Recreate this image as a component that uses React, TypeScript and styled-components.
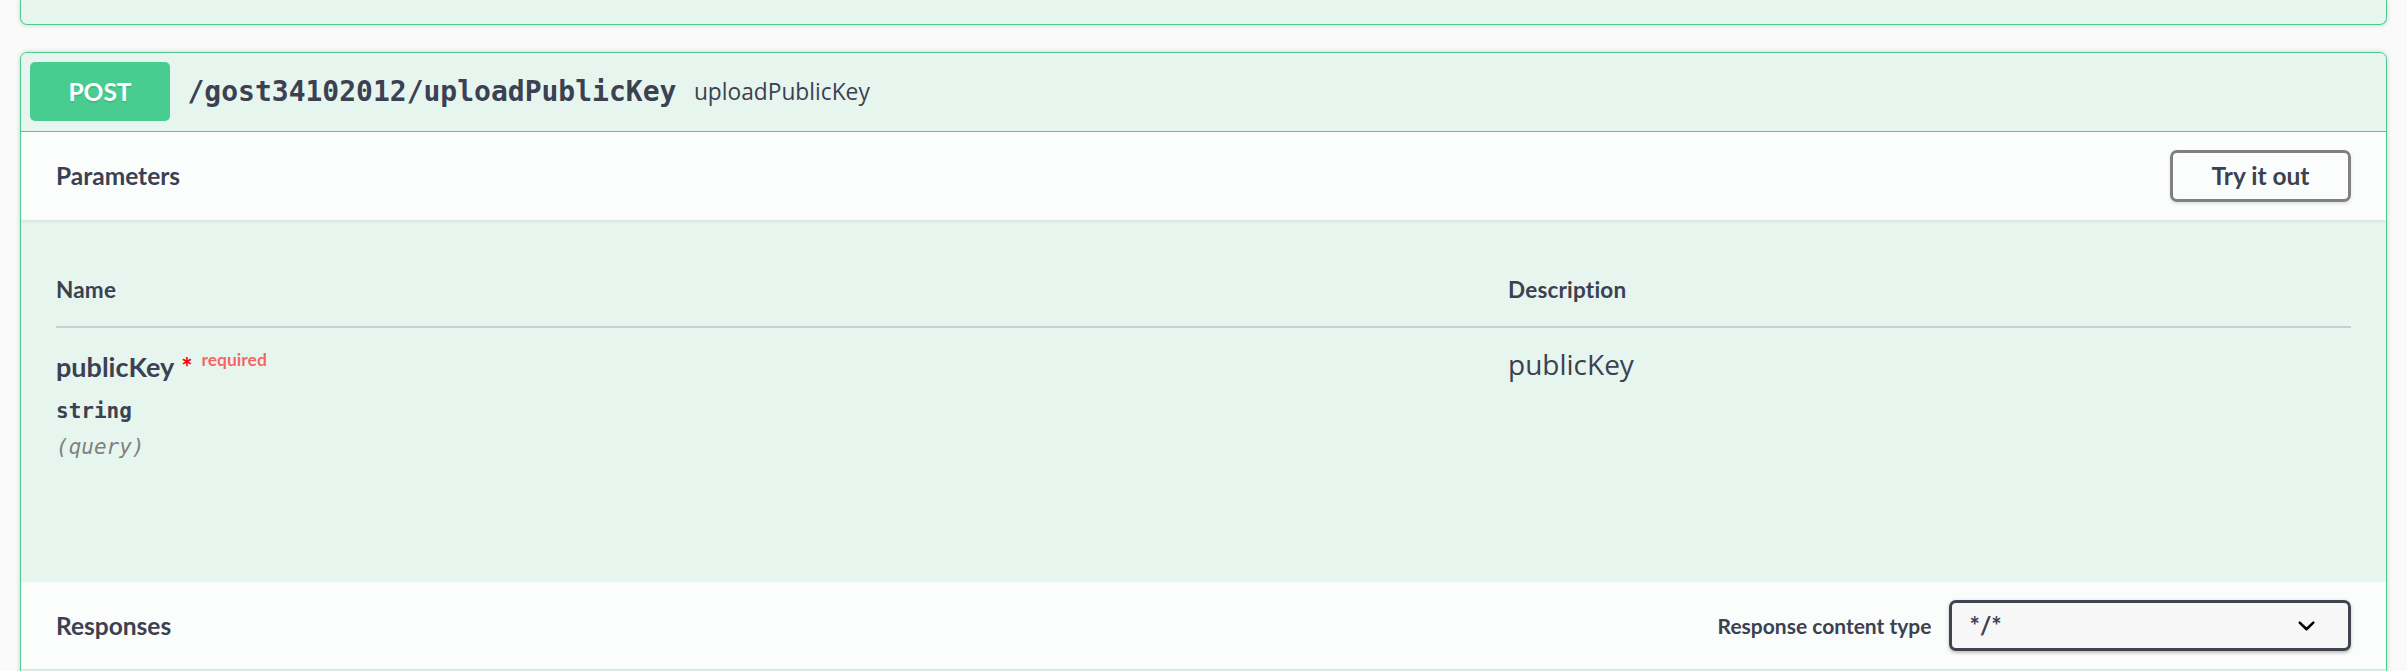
import React from "react";
import styled, { createGlobalStyle } from "styled-components";

const GlobalStyle = createGlobalStyle`
  html, body { margin: 0; padding: 0; background: #fafafa; }
  body { font-family: Lato, "Open Sans", sans-serif; color: #3b4151; }
  * { box-sizing: border-box; }
`;

const Page = styled.div`
  padding: 0 20px;
`;

const PrevBlock = styled.div`
  height: 25px;
  margin-bottom: 27px;
  background: rgba(73, 204, 144, 0.1);
  border: 1px solid #49cc90;
  border-top: none;
  border-radius: 0 0 7px 7px;
  box-shadow: 0 0 5px rgba(0, 0, 0, 0.19);
`;

const OpBlock = styled.div`
  background: rgba(73, 204, 144, 0.1);
  border: 1px solid #49cc90;
  border-radius: 7px;
  box-shadow: 0 0 5px rgba(0, 0, 0, 0.19);
  overflow: hidden;
`;

const Summary = styled.div`
  display: flex;
  align-items: center;
  padding: 9px 9px 10px;
  border-bottom: 1px solid #49cc90;
`;

const Method = styled.span`
  min-width: 140px;
  height: 59px;
  display: flex;
  align-items: center;
  justify-content: center;
  background: #49cc90;
  color: #fff;
  border-radius: 5px;
  font: 700 24.5px Lato, sans-serif;
  text-shadow: 0 1.75px 0 rgba(0, 0, 0, 0.1);
`;

const Path = styled.span`
  padding: 0 17.5px;
  font: 700 28px "DejaVu Sans Mono", monospace;
  color: #3b4151;
`;

const SummaryDesc = styled.span`
  flex: 1;
  font: 400 22.75px "Open Sans", sans-serif;
  color: #3b4151;
`;

const SectionHeader = styled.div`
  display: flex;
  align-items: center;
  min-height: 87.5px;
  padding: 14px 35px;
  background: hsla(0, 0%, 100%, 0.8);
  box-shadow: 0 1.75px 3.5px rgba(0, 0, 0, 0.1);
`;

const SectionTitle = styled.h4`
  flex: 1;
  margin: 0;
  font: 700 24.5px Lato, sans-serif;
  color: #3b4151;
`;

const TryButton = styled.button`
  width: 181px;
  height: 52px;
  border: 3.5px solid #808080;
  border-radius: 7px;
  background: transparent;
  box-shadow: 0 1.75px 3.5px rgba(0, 0, 0, 0.1);
  font: 700 24.5px Lato, sans-serif;
  color: #3b4151;
  cursor: pointer;
`;

const TableContainer = styled.div`
  padding: 34px 35px 35px;
`;

const ParamTable = styled.div`
  display: grid;
  grid-template-columns: 1452px 1fr;
`;

const HeadCell = styled.div`
  padding: 21px 0;
  font: 700 22.5px/30px Lato, sans-serif;
  letter-spacing: 0.2px;
  color: #3b4151;
  border-bottom: 2px solid rgba(59, 65, 81, 0.2);
`;

const BodyCell = styled.div`
  padding-top: 17.5px;
  min-height: 219px;
`;

const ParamName = styled.div`
  font: 700 27px/44px Lato, sans-serif;
  color: #3b4151;
`;

const Star = styled.span`
  color: red;
  margin-left: 7px;
`;

const Required = styled.span`
  font: 700 17.5px Lato, sans-serif;
  color: rgba(255, 0, 0, 0.6);
  padding: 0 8.75px;
  vertical-align: 11px;
`;

const ParamType = styled.div`
  padding: 10px 0;
  font: 600 21px/24px "DejaVu Sans Mono", monospace;
  color: #3b4151;
`;

const ParamIn = styled.div`
  margin-top: 1.5px;
  font: italic 400 21px/24px "DejaVu Sans Mono", monospace;
  color: #808080;
`;

const Markdown = styled.div`
  font: 400 28px "Open Sans", sans-serif;
  color: #3b4151;
`;

const ContentTypeLabel = styled.label`
  display: flex;
  align-items: center;
  font: 700 21px Lato, sans-serif;
  color: #3b4151;
`;

const LabelText = styled.span`
  padding-right: 17.5px;
`;

const SelectBox = styled.div`
  width: 402px;
  height: 51px;
  display: flex;
  align-items: center;
  justify-content: space-between;
  padding: 0 24px 0 17.5px;
  border: 3.5px solid #41444e;
  border-radius: 7px;
  background: #f7f7f7;
  box-shadow: 0 1.75px 3.5px 0 rgba(0, 0, 0, 0.25);
  font: 700 24.5px Lato, sans-serif;
  color: #3b4151;
`;

const ResponsesInner = styled.div`
  padding: 35px;
  min-height: 200px;
`;

const Chevron = () => (
  <svg width="35" height="35" viewBox="0 0 20 20" aria-hidden="true">
    <path
      fill="#000"
      d="M13.418 7.859a.695.695 0 0 1 .978 0 .68.68 0 0 1 0 .969l-3.908 3.83a.697.697 0 0 1-.979 0l-3.908-3.83a.68.68 0 0 1 0-.969.695.695 0 0 1 .978 0L10 11l3.418-3.141z"
    />
  </svg>
);

export default function App() {
  return (
    <>
      <GlobalStyle />
      <Page>
        <PrevBlock />
        <OpBlock>
          <Summary>
            <Method>POST</Method>
            <Path>/gost34102012/uploadPublicKey</Path>
            <SummaryDesc>uploadPublicKey</SummaryDesc>
          </Summary>
          <SectionHeader>
            <SectionTitle>Parameters</SectionTitle>
            <TryButton>Try it out</TryButton>
          </SectionHeader>
          <TableContainer>
            <ParamTable>
              <HeadCell>Name</HeadCell>
              <HeadCell>Description</HeadCell>
              <BodyCell>
                <ParamName>
                  publicKey
                  <Star>*</Star>
                  <Required>required</Required>
                </ParamName>
                <ParamType>string</ParamType>
                <ParamIn>(query)</ParamIn>
              </BodyCell>
              <BodyCell>
                <Markdown>publicKey</Markdown>
              </BodyCell>
            </ParamTable>
          </TableContainer>
          <SectionHeader>
            <SectionTitle>Responses</SectionTitle>
            <ContentTypeLabel>
              <LabelText>Response content type</LabelText>
              <SelectBox>
                <span>*/*</span>
                <Chevron />
              </SelectBox>
            </ContentTypeLabel>
          </SectionHeader>
          <ResponsesInner />
        </OpBlock>
      </Page>
    </>
  );
}
